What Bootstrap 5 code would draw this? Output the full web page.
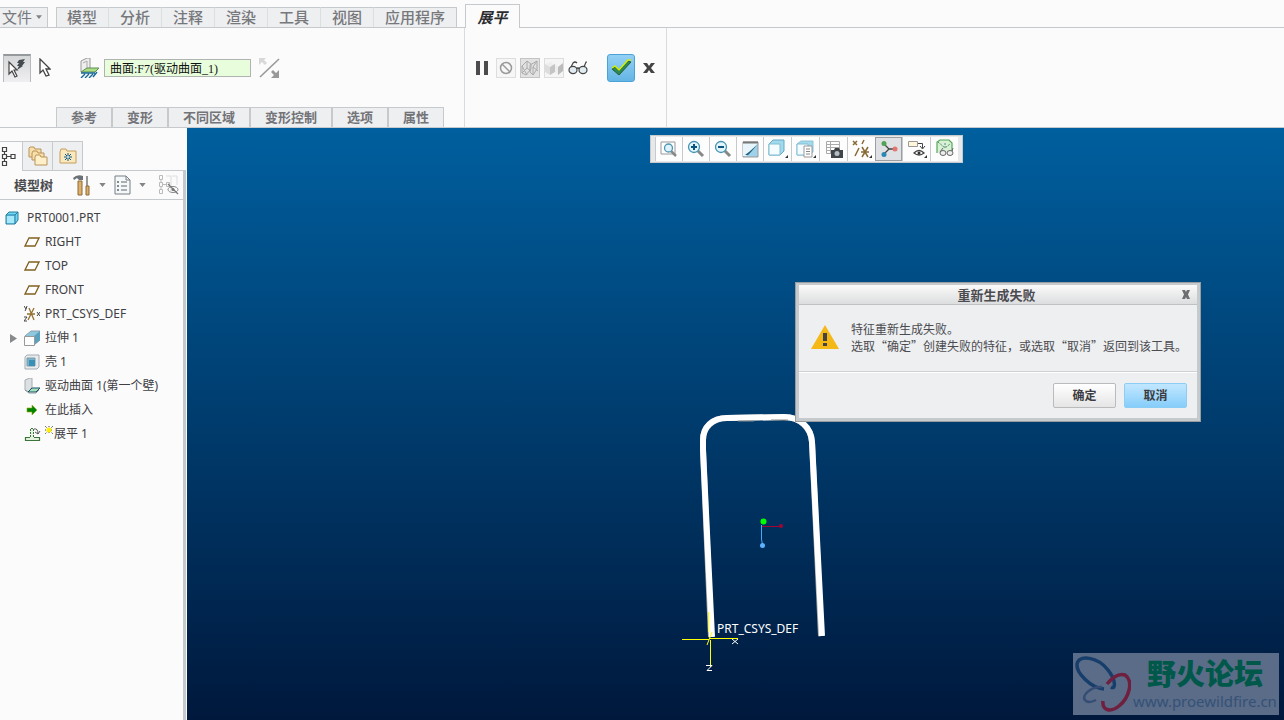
<!DOCTYPE html>
<html lang="zh-CN">
<head>
<meta charset="utf-8">
<meta name="viewport" content="width=device-width, initial-scale=1">
<title>展平 - PRT0001.PRT</title>
<link href="https://cdn.jsdelivr.net/npm/bootstrap@5.3.0/dist/css/bootstrap.min.css" rel="stylesheet">
<style>
  :root { --line: #c6cacd; --pane: #fbfbfb; --chip: #eeeff1; --ink: #4b4b50; }
  body { font-family: "Noto Sans", "Noto Sans CJK SC", sans-serif; font-size: 12px; line-height: 18px; color: var(--ink); background: var(--pane); }
  svg { display: block; flex: none; }
  button { font: inherit; color: inherit; padding: 0; border: 0; background: none; }
  .cjk { font-family: "Noto Sans CJK SC", sans-serif; }

  .ribbon-tabs { height: 28px; border-bottom: 1px solid var(--line); }
  .ribbon-tabs button { height: 20px; font-size: 15px; line-height: 18px; color: #77787c; background: var(--chip); border-top: 1px solid var(--line); padding-bottom: 2px; }
  .ribbon-tabs .file-tab { width: 48px; padding-left: 2px; border-right: 1px solid var(--line); }
  .main-tabs { border: solid var(--line); border-width: 0 1px; }
  .main-tabs button { padding: 0 11px 2px; font-weight: 500; }
  .main-tabs button:first-child { padding-left: 10px; }
  .main-tabs button + button { border-left: 1px solid #dcdfe1; }
  .ribbon-tabs .current-tab { width: 55px; height: 24px; margin-bottom: -1px; border: 1px solid var(--line); border-bottom: 0; background: var(--pane); color: #2c2c30; font-weight: 700; font-style: italic; line-height: 24px; padding: 0; }

  .ribbon { height: 100px; border-bottom: 1px solid var(--line); }
  .feature-group { width: 465px; border-right: 1px solid #d9dcde; }
  .feature-group .tool-line { padding-left: 3px; }
  .action-group { width: 202px; border-right: 1px solid #d9dcde; }
  .action-group .tool-line { padding-left: 11px; }
  .tool-line { height: 79px; }
  .tool-box { width: 28px; height: 28px; }
  .tool-on { border: 1px solid #b7babd; border-top: 2px solid #96999c; border-bottom: 0; background: linear-gradient(#d5d7d9, #efeff1); }
  .surface-label { margin-left: 29px; }
  .surface-input { width: 147px; height: 18px; padding: 0 5px; border: 1px solid #b0b4b1; background: #e7fddb; color: #111; font-family: "Liberation Serif", "Noto Sans CJK SC", serif; font-size: 12px; line-height: 16px; }
  .sub-tabs { margin-left: 56px; }
  .sub-tabs button { height: 20px; padding: 0 14px 2px; font-size: 13px; font-weight: 700; color: #737478; background: var(--chip); border: 1px solid var(--line); border-bottom: 0; line-height: 18px; }
  .accept { margin-left: 19px; border: 1px solid #4aa3d6; border-radius: 3px; background: linear-gradient(#93d0f5, #65b5e4); }

  .workspace { height: calc(100vh - 128px); }
  .side { width: 187px; padding-top: 13px; }
  .side-tabs { height: 29px; }
  .side-tabs button { width: 31px; height: 30px; margin-bottom: -1px; border: 1px solid var(--line); background: var(--chip); margin-left: -1px; z-index: 0; }
  .side-tabs button:first-child { width: 24px; border-bottom-color: var(--pane); background: var(--pane); }
  .side-body { border-right: 3px solid var(--line); border-top: 1px solid var(--line); margin-right: 1px; }
  .tree-head { height: 29px; border-bottom: 1px solid var(--line); padding-left: 14px; font-size: 13px; }
  .tree { padding: 6px 0 0 5px; color: #404044; }
  .tree li { height: 24px; }
  .tree li li { padding-left: 19px; }
  .tree li li > span { padding-left: 1px; }

  .scene { background: linear-gradient(#005f9e, #00183c); }
  .view-bar { left: 463px; top: 7px; height: 28px; padding: 1px 4px; background: #e6e8ea; border: 1px solid var(--line); }
  .view-bar button { width: 27px; background: #fdfdfd; border-left: 1px solid var(--line); }
  .view-bar .wide-cell { width: 28px; }
  .view-bar .cell-on { background: #dfe1e4; border: 1px solid #9c9fa2; }
  .model { left: 493px; top: 272px; }
  .dialog-box { left: 608px; top: 154px; width: 406px; border: 1px solid #999da0; background: var(--line); padding: 2px 3px 3px; }
  .dialog-title { height: 20px; padding-right: 3px; border-bottom: 1px solid #bfc2c4; background: linear-gradient(#fafafa, #dcddde); font-size: 13px; line-height: 19px; }
  .dialog-close { right: 6px; top: 5px; }
  .dialog-body { height: 66px; padding: 0 12px 2px; background: var(--chip); line-height: 17px; }
  .dialog-foot { height: 47px; padding: 0 10px; border-top: 1px solid #cfd1d3; background: var(--chip); box-shadow: inset 0 1px #fff; }
  .dialog-foot button { width: 63px; height: 25px; border: 1px solid #b9bbbd; border-radius: 2px; background: linear-gradient(#fff, #e5e5e5); font-weight: 700; color: #3c3c42; }
  .dialog-foot .preferred { border-color: #8bcdf5; background: linear-gradient(#c2e7ff, #86cdfa); }
  .site-mark { right: 5px; bottom: 5px; width: 206px; height: 62px; background: #5a6c87; }
  .mark-name { font-size: 29px; line-height: 38px; font-weight: 900; color: #00584a; }
  .mark-url { font-family: "Noto Sans", sans-serif; font-size: 15px; line-height: 20px; color: #355178; }
</style>
</head>
<body class="overflow-hidden">
<svg width="0" height="0" class="position-absolute" aria-hidden="true">
  <symbol id="plane" viewBox="0 0 16 16"><path d="M5 4h10l-4 8H1z" fill="#fff" stroke="#80601f" stroke-width="1.3"/></symbol>
  <symbol id="caret" viewBox="0 0 8 5"><path d="M0 0h8L4 5z" fill="#828487"/></symbol>
  <symbol id="glasses" viewBox="0 0 20 14"><path d="M2 8L5 2q2-2 4 0M16 6l2-5 1 0M8 8q2-2 4 0" fill="none" stroke="#444" stroke-width="1.2"/><ellipse cx="5" cy="9" rx="4" ry="3.6" fill="#e1ecf2" stroke="#444" stroke-width="1.2"/><ellipse cx="15" cy="9" rx="4" ry="3.6" fill="#e1ecf2" stroke="#444" stroke-width="1.2"/></symbol>
  <symbol id="pointer" viewBox="0 0 12 20"><path d="M1 1v14l3-3 3 6 3-1-3-6h4z" fill="#fff" stroke="#444" stroke-width="1.3"/></symbol>
</svg>

<header class="cjk">
  <nav class="ribbon-tabs d-flex align-items-end" aria-label="功能区">
    <button class="file-tab d-flex align-items-center me-2"><span>文件</span><svg class="ms-1" width="6" height="4"><use href="#caret"/></svg></button>
    <div class="main-tabs d-flex me-2">
      <button>模型</button><button>分析</button><button>注释</button><button>渲染</button><button>工具</button><button>视图</button><button>应用程序</button>
    </div>
    <button class="current-tab">展平</button>
  </nav>

  <div class="ribbon d-flex">
    <section class="feature-group d-flex flex-column">
      <div class="tool-line d-flex align-items-center">
        <button class="tool-box tool-on d-flex align-items-center justify-content-center" aria-label="选取几何">
          <svg width="22" height="22" viewBox="0 0 22 22"><path d="M3 4v12l3-3 3 6 2-1-3-6h3z" fill="#fff" stroke="#444" stroke-width="1.2"/><path d="M13 2l6-1-2 3h2l-3 4h1l-6 4 2-4h-2l2-3h-2z" fill="#444c50"/></svg>
        </button>
        <button class="ms-2" aria-label="选取"><svg width="12" height="20"><use href="#pointer"/></svg></button>
        <label class="surface-label d-flex align-items-center" for="surface">
          <svg width="20" height="20" viewBox="0 0 20 20"><path d="M1 3l6-3h3v10l-4 4H1z" fill="#eee" stroke="#999"/><path d="M3 5l4-2v8" fill="none" stroke="#aaa"/><path d="M7 10h12l-4 4H1l6-4z" fill="#a8dc85" stroke="#5c8f50"/><path d="M1 15h14M5 16l-4 4M9 16l-4 4M13 16l-4 4M17 14l-4 5" stroke="#18699a" stroke-width="1.4"/></svg>
        </label>
        <input class="surface-input ms-1" id="surface" type="text" value="曲面:F7(驱动曲面_1)">
        <button class="ms-2" aria-label="反向"><svg width="21" height="20" viewBox="0 0 21 20"><path d="M1 19L20 1" stroke="#999" stroke-width="1.6"/><path d="M0 0h7L5 2l3 3-2 2-3-3-3 3z" fill="#d8d8d8"/><path d="M20 20h-8l3-3-3-3 2-2 3 3 3-3z" fill="#999"/></svg></button>
      </div>
      <div class="sub-tabs d-flex">
        <button>参考</button><button>变形</button><button>不同区域</button><button>变形控制</button><button>选项</button><button>属性</button>
      </div>
    </section>
    <section class="action-group">
      <div class="tool-line d-flex align-items-center">
        <button aria-label="暂停"><svg width="12" height="14"><path d="M0 0h4v14H0zM8 0h4v14H8z" fill="#4c4c4e"/></svg></button>
        <button class="ms-2" disabled aria-label="无预览"><svg width="20" height="20"><rect x=".5" y=".5" width="19" height="19" fill="#f6f6f6" stroke="#ddd"/><circle cx="10" cy="10" r="5.500" fill="none" stroke="#999" stroke-width="1.5"/><path d="M6 6l8 8" stroke="#999" stroke-width="1.5"/></svg></button>
        <button class="ms-1" disabled aria-label="分离"><svg width="20" height="20"><rect x=".5" y=".5" width="19" height="19" fill="#e2e2e2" stroke="#c4c4c4"/><path d="M2 8l5-5 4 3v5l-5 6-4-2zM7 3v7l-5 5M7 10l4 3M10 7l7-4v8l-4 6-3-3zM17 3l-4 6v8M13 9l5 4M2 8l5 9" fill="none" stroke="#aaa"/></svg></button>
        <button class="ms-1" disabled aria-label="连接"><svg width="20" height="20"><rect x=".5" y=".5" width="19" height="19" fill="#f5f5f5" stroke="#ddd"/><path d="M1 6l6-2 4 3-5 2z" fill="#eee"/><path d="M1 6l5 3v8l-5-3z" fill="#ddd"/><path d="M6 9l5-3v8l-5 3z" fill="#c5c5c5"/><path d="M11 6l3 3v8l-3-3z" fill="#eee"/><path d="M14 9l5-4v8l-5 4z" fill="#bcbcbc"/></svg></button>
        <button class="ms-1" aria-label="预览"><svg width="20" height="14"><use href="#glasses"/></svg></button>
        <button class="tool-box accept d-flex align-items-center justify-content-center" aria-label="确定特征"><svg width="22" height="18" viewBox="0 0 22 18"><path d="M2 10l3-2 4 4L18 2l3 1L9 16z" fill="#2a8a55" stroke="#285b33"/><path d="M2 9l3-2 4 4L18 1h3" fill="none" stroke="#d5ee00" stroke-width="1.5"/></svg></button>
        <button class="ms-2" aria-label="取消特征"><svg width="12" height="10"><path d="M0 0h4l2 3 2-3h4L8 5l4 5H8L6 7l-2 3H0l4-5z" fill="#444"/></svg></button>
      </div>
    </section>
  </div>
</header>

<main class="workspace d-flex">
  <aside class="side d-flex flex-column flex-shrink-0">
    <div class="side-tabs d-flex">
      <button class="d-flex align-items-center" aria-label="模型树"><svg width="16" height="20" viewBox="0 0 16 20" fill="none" stroke="#444" stroke-width="1.2"><path d="M2.500 1.500h4v4h-4zM2.500 8.500h4v4h-4zM2.500 15.500h4v4h-4zM11 8.500h4v4h-4zM4.500 6v2M4.500 13v2M7 10.500h4"/></svg></button>
      <button class="d-flex align-items-center justify-content-center" aria-label="文件夹浏览器"><svg width="20" height="20" viewBox="0 0 20 20" fill="#f8dfa9" stroke="#b8935a"><path d="M1 2l1-1h4l1 2h6v8H1z"/><path d="M4 7l1-2h4l1 2h6v7H4z"/><path d="M7 11l1-2h4l1 2h6v8H7z" fill="#fff0c9"/></svg></button>
      <button class="d-flex align-items-center justify-content-center" aria-label="收藏夹"><svg width="18" height="16" viewBox="0 0 18 16"><path d="M1 4l1-3h5l1 2h9v12H1z" fill="#fbe9bd" stroke="#c39d5b"/><path d="M9 5v8M5 9h8M6 6l6 6M12 6l-6 6" stroke="#085985"/><circle cx="9" cy="9" r="1" fill="#fff"/></svg></button>
    </div>
    <div class="side-body flex-grow-1">
      <div class="tree-head d-flex align-items-center text-nowrap">
        <strong class="cjk">模型树</strong>
        <button class="d-flex align-items-center ms-3" aria-label="设置"><svg class="ms-1" width="18" height="21" viewBox="0 0 18 21"><path d="M0 3q4-4 10-2v4H6L4 3 1 5z" fill="#6b7277"/><path d="M5 6h4v14H5z" fill="#ddb06b" stroke="#8e6b36"/><path d="M14 1v10" stroke="#777" stroke-width="1.5"/><path d="M13 11h3v9h-3z" fill="#dcaf68" stroke="#8e6b36"/></svg><svg class="ms-2" width="7" height="4"><use href="#caret"/></svg></button>
        <button class="d-flex align-items-center ms-2" aria-label="显示"><svg width="17" height="20" viewBox="0 0 17 20"><path d="M1 1h11l4 4v14H1z" fill="#f5f8f9" stroke="#777f84"/><path d="M12 1v4h4" fill="none" stroke="#777f84"/><path d="M7 7h6M7 11h6M7 15h6" stroke="#5f676b"/><path d="M3.500 6.500h1v1h-1zM3.500 10.500h1v1h-1zM3.500 14.500h1v1h-1z" fill="none" stroke="#5f676b"/></svg><svg class="ms-2" width="7" height="4"><use href="#caret"/></svg></button>
        <button class="ms-auto pe-1" disabled aria-label="隐藏树"><svg width="21" height="20" viewBox="0 0 21 20" fill="none"><g stroke="#bbb"><path d="M1.500.5h3v4h-3zM1.500 7.500h3v4h-3zM1.500 14.500h3v4h-3zM8.500 7.500h3v4h-3zM3 5v2M3 12v2M5 9.500h3"/><path d="M8 1h5v15M14 1h5v9" stroke="#ddd"/></g><ellipse cx="15" cy="14.500" rx="5" ry="3" stroke="#888"/><circle cx="15" cy="14.500" r="1.500" fill="#777"/><path d="M10 9l10 10" stroke="#777" stroke-width="1.2"/></svg></button>
      </div>

      <ul class="tree list-unstyled mb-0">
        <li class="d-flex align-items-center"><svg width="14" height="14" viewBox="0 0 14 14"><path d="M1 4l3-3h9v8l-3 4H1z" fill="#70d5f3" stroke="#287c9d"/><path d="M1 4h9l3-3M10 4v9" fill="none" stroke="#287c9d"/><path d="M2 5h7v7H2z" fill="#a9e7fa"/></svg><span class="ms-1 ps-1">PRT0001.PRT</span></li>
        <li><ul class="list-unstyled">
          <li class="d-flex align-items-center"><svg width="16" height="16"><use href="#plane"/></svg><span class="ms-1">RIGHT</span></li>
          <li class="d-flex align-items-center"><svg width="16" height="16"><use href="#plane"/></svg><span class="ms-1">TOP</span></li>
          <li class="d-flex align-items-center"><svg width="16" height="16"><use href="#plane"/></svg><span class="ms-1">FRONT</span></li>
          <li class="d-flex align-items-center"><svg width="16" height="16" viewBox="0 0 16 16" fill="none"><path d="M3 8h8M5 2l5 12M10 2L4 14" stroke="#95702d" stroke-width="1.3"/><path d="M0 0l2 3 1-3M2 3L1 5M0 11h3l-3 4h3M13 6l3 4M16 6l-3 4" stroke="#444"/></svg><span class="ms-1">PRT_CSYS_DEF</span></li>
          <li class="d-flex align-items-center position-relative"><svg class="position-absolute start-0 ms-1" width="9" height="9"><path d="M1 0l7 4.500L1 9z" fill="#87898b"/></svg><svg width="16" height="16" viewBox="0 0 16 16"><path d="M1 6l6-5h9v9l-6 5" fill="#8fc7df" stroke="#8ba3ae"/><path d="M10 6l6-5v9l-6 5z" fill="#5aa0bf"/><path d="M.5 6.500h10v9H.5z" fill="#fdfdfd" stroke="#999"/></svg><span class="ms-1">拉伸 1</span></li>
          <li class="d-flex align-items-center"><svg width="16" height="16" viewBox="0 0 16 16"><path d="M1 3l2-2h12v12l-2 2H1z" fill="#e8ecef" stroke="#a3abb0"/><path d="M3 4h8v8H3z" fill="#74b4d0" stroke="#8199a5"/><path d="M5 6h6v6H5z" fill="#3c90b5"/></svg><span class="ms-1">壳 1</span></li>
          <li class="d-flex align-items-center"><svg width="16" height="16" viewBox="0 0 16 16"><path d="M1 2l5-2h2v9l-3 5-4-2z" fill="#dce0e3" stroke="#a5adb2"/><path d="M8 10h8l-4 4H4z" fill="#a9e0bc" stroke="#174f69"/><path d="M1 12l4 3h7l3-3" fill="none" stroke="#8a979e"/></svg><span class="ms-1">驱动曲面 1(第一个壁)</span></li>
          <li class="d-flex align-items-center"><svg width="16" height="16" viewBox="0 0 16 16"><path d="M3 6h5V3l5 5-5 5v-3H3z" fill="#008500" stroke="#97aa12" stroke-width=".6"/></svg><span class="ms-1">在此插入</span></li>
          <li class="d-flex align-items-center"><svg width="17" height="16" viewBox="0 0 17 16"><path d="M1.500 11.500h5v-9h3v9h6v3h-14z" fill="#e4f2dd"/><path d="M6.500 11V2.500h3V11" fill="none" stroke="#3b7339" stroke-dasharray="2 1"/><path d="M6 11.500H1.500v3h14v-3H10" fill="none" stroke="#3b7339" stroke-width="1.200"/><path d="M10 3q4-1 4 5M11 6l3 2 2-3" fill="none" stroke="#555"/></svg><svg class="mb-2 ms-1" width="8" height="8" viewBox="0 0 8 8"><path d="M4 0v8M0 4h8M0 0l8 8M8 0L0 8" stroke="#444" stroke-dasharray="1 1"/><circle cx="4" cy="4" r="2.500" fill="#ffef00"/></svg><span>展平 1</span></li>
        </ul></li>
      </ul>
    </div>
  </aside>

  <section class="scene position-relative flex-grow-1 overflow-hidden" aria-label="图形窗口">
    <div class="view-bar position-absolute d-flex" role="toolbar">
      <button class="d-flex align-items-center justify-content-center" aria-label="重新调整"><svg width="18" height="18" viewBox="0 0 18 18"><path d="M1 2h14v12H1z" fill="#fff" stroke="#999"/><path d="M11 11l5 5" stroke="#888" stroke-width="2.500"/><circle cx="8.500" cy="8" r="4" fill="#dff3fb" stroke="#4e96b3" stroke-width="1.300"/></svg></button>
      <button class="d-flex align-items-center justify-content-center" aria-label="放大"><svg width="18" height="18" viewBox="0 0 18 18"><path d="M10 10l6 6" stroke="#888" stroke-width="3"/><circle cx="7" cy="7" r="5.500" fill="#e2f5fd" stroke="#4793b1" stroke-width="1.300"/><path d="M4 7h6M7 4v6" stroke="#0b5681" stroke-width="2"/></svg></button>
      <button class="d-flex align-items-center justify-content-center" aria-label="缩小"><svg width="18" height="18" viewBox="0 0 18 18"><path d="M10 10l6 6" stroke="#888" stroke-width="3"/><circle cx="7" cy="7" r="5.500" fill="#e2f5fd" stroke="#4793b1" stroke-width="1.300"/><path d="M4 7h6" stroke="#0b5681" stroke-width="2"/></svg></button>
      <button class="d-flex align-items-center justify-content-center" aria-label="重画"><svg width="17" height="17" viewBox="0 0 17 17"><path d="M1 1h15v15H1z" fill="#9fd2e8" stroke="#999"/><path d="M1 2h15L4 15H1z" fill="#e8f6fb"/><path d="M1 1.500h15" stroke="#777" stroke-width="2"/><path d="M15 4l-6 7-3 3H3l4-3z" fill="#185b7d"/></svg></button>
      <button class="wide-cell d-flex align-items-center justify-content-center" aria-label="显示样式"><svg width="20" height="20" viewBox="0 0 20 20"><path d="M1 5l4-4h11v11l-4 4H1z" fill="#a3d9ec" stroke="#62a9c3"/><path d="M1 5h11v11H1z" fill="#f5fcff" stroke="#80bed4"/><path d="M20 16v3h-3z" fill="#333"/></svg></button>
      <button class="wide-cell d-flex align-items-center justify-content-center" aria-label="已保存方向"><svg width="20" height="20" viewBox="0 0 20 20"><path d="M1 5l4-3h12v11l-4 3H1z" fill="#a3d9ec" stroke="#8fc3d6"/><path d="M1 5h11v11H1z" fill="#f5fcff" stroke="#80bed4"/><path d="M8 7h8v11H8z" fill="#fff" stroke="#999"/><path d="M10 10h4M10 12.500h4M10 15h4" stroke="#888"/><path d="M20 16v3h-3z" fill="#333"/></svg></button>
      <button class="wide-cell d-flex align-items-center justify-content-center" aria-label="视图管理器"><svg width="18" height="18" viewBox="0 0 18 18"><path d="M1.500 1.500h13v12h-13zM1.500 4.500h13M1.500 7.500h13M1.500 10.500h13M5.500 1.500v12" fill="#fff" stroke="#aaa"/><path d="M6 10h3l1-2h4l1 2h3v8H6z" fill="#3f4548"/><circle cx="12" cy="13.500" r="2.500" fill="#b5bdc1"/></svg></button>
      <button class="wide-cell d-flex align-items-center justify-content-center" aria-label="基准显示"><svg width="20" height="20" viewBox="0 0 20 20"><path d="M1 2l4 4M5 2L1 6M12 1L10 5M7 9L3 17M10 8l6 10M16 8l-6 10M9 13h8" fill="none" stroke="#8a6a34" stroke-width="1.500"/><path d="M20 16v3h-3z" fill="#333"/></svg></button>
      <button class="cell-on d-flex align-items-center justify-content-center" aria-label="旋转中心"><svg width="18" height="18" viewBox="0 0 18 18"><path d="M4 4l5 5-5 5M9 9h6" fill="none" stroke="#444" stroke-width="1.300"/><circle cx="4" cy="3.500" r="2.500" fill="#51a356"/><circle cx="4" cy="14.500" r="2.500" fill="#2b87b3"/><circle cx="15" cy="9" r="2.500" fill="#e07671"/></svg></button>
      <button class="wide-cell d-flex align-items-center justify-content-center" aria-label="注释显示"><svg width="20" height="20" viewBox="0 0 20 20"><path d="M1.500 2.500h9v5h-9z" fill="#fff7dc" stroke="#999"/><path d="M11 4.500h4.500V9M13 7l2.500 3L18 7" fill="none" stroke="#444"/><path d="M7 14q5-5 10 0-5 4-10 0z" fill="#fff" stroke="#444" stroke-width="1.300"/><circle cx="12" cy="14" r="1.500" fill="#333"/><path d="M20 16v3h-3z" fill="#333"/></svg></button>
      <button class="wide-cell d-flex align-items-center justify-content-center" aria-label="快速检查"><svg width="20" height="20" viewBox="0 0 20 20"><path d="M2 14V3l3-2h9l3 3v8" fill="#d8f1d6" stroke="#54a957" stroke-width="1.200"/><path d="M3 3l7 6M10 4v5l5-4" fill="none" stroke="#57896e" stroke-dasharray="2 1"/><ellipse cx="8" cy="14" rx="3" ry="2.500" fill="#eee" stroke="#666"/><ellipse cx="15" cy="14" rx="3" ry="2.500" fill="#eee" stroke="#666"/><path d="M5 13l3-4M17 12l1-3" stroke="#666"/></svg></button>
    </div>

    <svg class="model position-absolute" width="150" height="280" viewBox="680 400 150 280" role="img" aria-label="U 形零件">
      <path d="M711 637L703 450V440C703 428 712 418 727 418L784 417C800 417 811 428 812 442L821 636" fill="none" stroke="#aaa" stroke-width="6"/>
      <path d="M712 637L703 450V440C703 427 712 418 727 418L784 417C800 417 811 427 812 442L822 636" fill="none" stroke="#fff" stroke-width="6"/>
      <path d="M738 421h16M771 420h17" stroke="#8b8b8b"/>
      <path d="M761.500 525v14l1 6" fill="none" stroke="#4aa9f6"/><path d="M762 526.500h18" stroke="#a00535"/>
      <circle cx="763.500" cy="521.500" r="3" fill="#0f0"/><circle cx="781" cy="526" r="2" fill="#a00535"/><circle cx="762.500" cy="545.500" r="2.500" fill="#5bb2ff"/>
      <g fill="none"><path d="M682 639.500h27" stroke="#ff0"/><path d="M709 638.500h29" stroke="#ff0"/><path d="M708.500 612v20M710.500 640v27M712 632l-5 13" stroke="#ff0"/><path d="M732 639l6 5M738 639l-6 5M706 665.500h6l-5 5h5" stroke="#fff"/></g>
      <text x="717" y="633" fill="#fff" font-size="12">PRT_CSYS_DEF</text>
    </svg>

    <div class="dialog-box cjk position-absolute" role="dialog" aria-labelledby="fail-title">
      <div class="dialog-title position-relative text-center"><strong id="fail-title">重新生成失败</strong><button class="dialog-close position-absolute" aria-label="关闭"><svg width="10" height="9"><path d="M1 0h3l1 2 1-2h3L7 4.500 9 9H6L5 7 4 9H1l2-4.500z" fill="#6c6e72"/></svg></button></div>
      <div class="dialog-body d-flex align-items-center">
        <svg width="28" height="25" viewBox="0 0 28 25"><path d="M14 0l14 24H0z" fill="#f4b817"/><path d="M12 8h4v8h-4zM12 18h4v3h-4z" fill="#444"/></svg>
        <div class="ms-2 ps-1 text-nowrap">特征重新生成失败。<br>选取“确定”创建失败的特征，或选取“取消”返回到该工具。</div>
      </div>
      <div class="dialog-foot d-flex align-items-center justify-content-end gap-2"><button>确定</button><button class="preferred">取消</button></div>
    </div>

    <div class="site-mark position-absolute d-flex">
      <svg width="58" height="62" viewBox="0 0 58 62" fill="none"><path d="M31 36C18 35 3 20 4 11C6 1 25 4 35 17C43 27 43 37 38 34" stroke="#173e6b" stroke-width="3.500"/><path d="M34 31Q44 19 52 22C61 28 56 45 46 53C37 60 29 57 30 48" stroke="#70203f" stroke-width="3.500"/><path d="M29 34C18 33 8 43 12 47Q15 51 23 47" stroke="#354d75" stroke-width="2.500"/></svg>
      <div class="text-center flex-grow-1"><div class="mark-name cjk">野火论坛</div><div class="mark-url">www.proewildfire.cn</div></div>
    </div>
  </section>
</main>
<script src="https://cdn.jsdelivr.net/npm/bootstrap@5.3.0/dist/js/bootstrap.bundle.min.js"></script>
</body>
</html>
